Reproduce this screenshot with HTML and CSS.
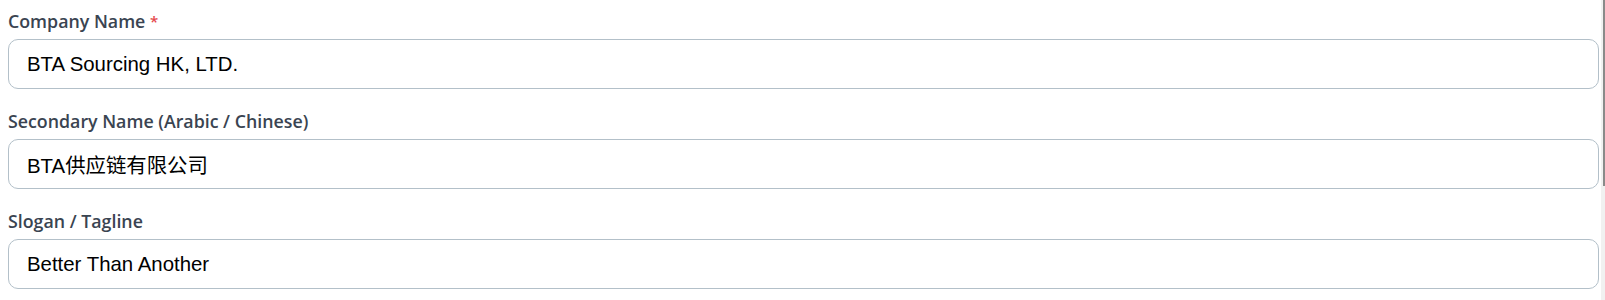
FILE: index.html
```html
<!DOCTYPE html>
<html lang="en">
<head>
<meta charset="utf-8">
<title>Company Details</title>
<link rel="stylesheet" href="styles.css">
</head>
<body>
<form class="form">
  <div class="field">
    <label class="label" for="company">Company Name <span class="req">*</span></label>
    <input class="input" id="company" type="text" value="BTA Sourcing HK, LTD.">
  </div>
  <div class="field">
    <label class="label" for="secondary">Secondary Name (Arabic / Chinese)</label>
    <input class="input" id="secondary" type="text" value="BTA供应链有限公司">
  </div>
  <div class="field">
    <label class="label" for="slogan">Slogan / Tagline</label>
    <input class="input" id="slogan" type="text" value="Better Than Another">
  </div>
</form>
<div class="scrollbar"><div class="thumb"></div></div>
</body>
</html>
```

FILE: styles.css
```css
html, body {
  margin: 0;
  padding: 0;
  background: #ffffff;
  overflow: hidden;
}
.form {
  display: flex;
  flex-direction: column;
  gap: 20px;
  padding: 9px 6px 0 8px;
}
.field {
  display: flex;
  flex-direction: column;
  gap: 6px;
}
.label {
  height: 24px;
  font-family: "Open Sans", "Noto Sans", sans-serif;
  font-weight: 600;
  font-size: 17.8px;
  line-height: 24px;
  color: #3a4451;
}
.req {
  color: #e5484d;
  font-size: 15px;
  vertical-align: 1px;
}
.input {
  box-sizing: border-box;
  width: 100%;
  height: 50px;
  margin: 0;
  padding: 0 18px;
  border: 1px solid #b3c0c9;
  border-radius: 10px;
  background: #ffffff;
  font-family: "Liberation Sans", Arial, "Noto Sans CJK SC", sans-serif;
  font-size: 20.4px;
  color: #000000;
  outline: none;
}
.scrollbar {
  position: fixed;
  top: 0;
  right: 0;
  width: 4px;
  height: 100%;
  background: #f1f1f1;
}
.thumb {
  margin-left: 2px;
  width: 2px;
  height: 186px;
  background: #8a8a8a;
}
```
